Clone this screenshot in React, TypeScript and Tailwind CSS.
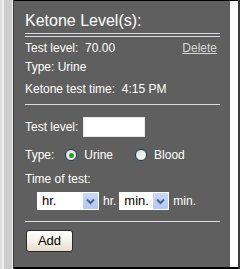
import React from "react";

function Radio({ checked }: { checked: boolean }) {
  return (
    <span className="flex items-center justify-center w-[12px] h-[12px] rounded-full border border-[#1c3d5c] bg-gradient-to-br from-[#dcdcd6] to-[#ffffff] shrink-0">
      {checked && <span className="block w-[5px] h-[5px] rounded-full bg-[#27a327]" />}
    </span>
  );
}

function Select({ label, width }: { label: string; width: string }) {
  return (
    <div className={`flex items-center h-[18px] bg-white ${width} pl-[5px] pr-[1px] justify-between`}>
      <span className="text-[13px] leading-[18px] text-black">{label}</span>
      <span className="flex items-center justify-center w-[15px] h-[16px] bg-gradient-to-b from-[#c8d8f8] to-[#b4c8f0] rounded-[1px]">
        <svg width="9" height="7" viewBox="0 0 9 7">
          <path d="M1 1.5 L4.5 5 L8 1.5" fill="none" stroke="#4a5f8a" strokeWidth="2" />
        </svg>
      </span>
    </div>
  );
}

export default function App() {
  return (
    <div
      className="flex w-[240px] h-[269px] overflow-hidden"
      style={{ fontFamily: '"Liberation Sans", Arial, sans-serif' }}
    >
      <div className="flex h-full shrink-0">
        <div className="w-[2px] h-full bg-[#dedede]" />
        <div className="w-[2px] h-full bg-[#f2f2f2]" />
        <div className="w-[8px] h-full bg-[#cdcdcd]" />
        <div className="w-[1px] h-full bg-[#f0f0f0]" />
        <div className="w-[1px] h-full bg-[#3a3a3a]" />
      </div>
      <div className="flex flex-col w-[216px] h-full bg-[#5f5f5f] border-t border-b-2 border-black pl-[11px] pr-[10px] pt-[10px] text-white text-[12px] leading-[20px]">
        <div className="text-[16px] leading-[20px] text-white">Ketone Level(s):</div>
        <div className="mt-[2px] h-[4px] border-t border-b border-[#dcdcdc]" />
        <div className="mt-[1px] flex justify-between">
          <span className="whitespace-pre">Test level:  70.00</span>
          <span className="underline text-[#d6d6d6] mr-[3px]">Delete</span>
        </div>
        <div className="-mt-[1px]">Type: Urine</div>
        <div className="mt-[2px] whitespace-pre">Ketone test time:  4:15 PM</div>
        <div className="mt-[5px] h-px bg-[#dcdcdc]" />
        <div className="mt-[12px] flex items-center">
          <span>Test level:</span>
          <div className="ml-[5px] w-[62px] h-[20px] bg-white border border-[#e8e8e8]" />
        </div>
        <div className="mt-[8px] flex items-center">
          <span>Type:</span>
          <span className="ml-[11px]"><Radio checked /></span>
          <span className="ml-[7px]">Urine</span>
          <span className="ml-[22px]"><Radio checked={false} /></span>
          <span className="ml-[7px]">Blood</span>
        </div>
        <div className="mt-[4px]">Time of test:</div>
        <div className="mt-[3px] flex items-center pl-[12px]">
          <Select label="hr." width="w-[62px]" />
          <span className="ml-[4px] leading-[18px]">hr.</span>
          <span className="ml-[3px]"><Select label="min." width="w-[50px]" /></span>
          <span className="ml-[4px] leading-[18px]">min.</span>
        </div>
        <div className="mt-[11px] h-px bg-[#dcdcdc]" />
        <div className="mt-[8px]">
          <button className="w-[47px] h-[22px] ml-[1px] rounded-[3px] border border-[#2a2a2a] bg-gradient-to-b from-[#ffffff] via-[#f4f2ea] to-[#e6ddcc] text-black text-[13px] leading-[20px]">
            Add
          </button>
        </div>
      </div>
      <div className="w-[8px] h-full bg-white border-t border-b-2 border-black" />
      <div className="w-[2px] h-full bg-[#3c3c3c]" />
    </div>
  );
}
